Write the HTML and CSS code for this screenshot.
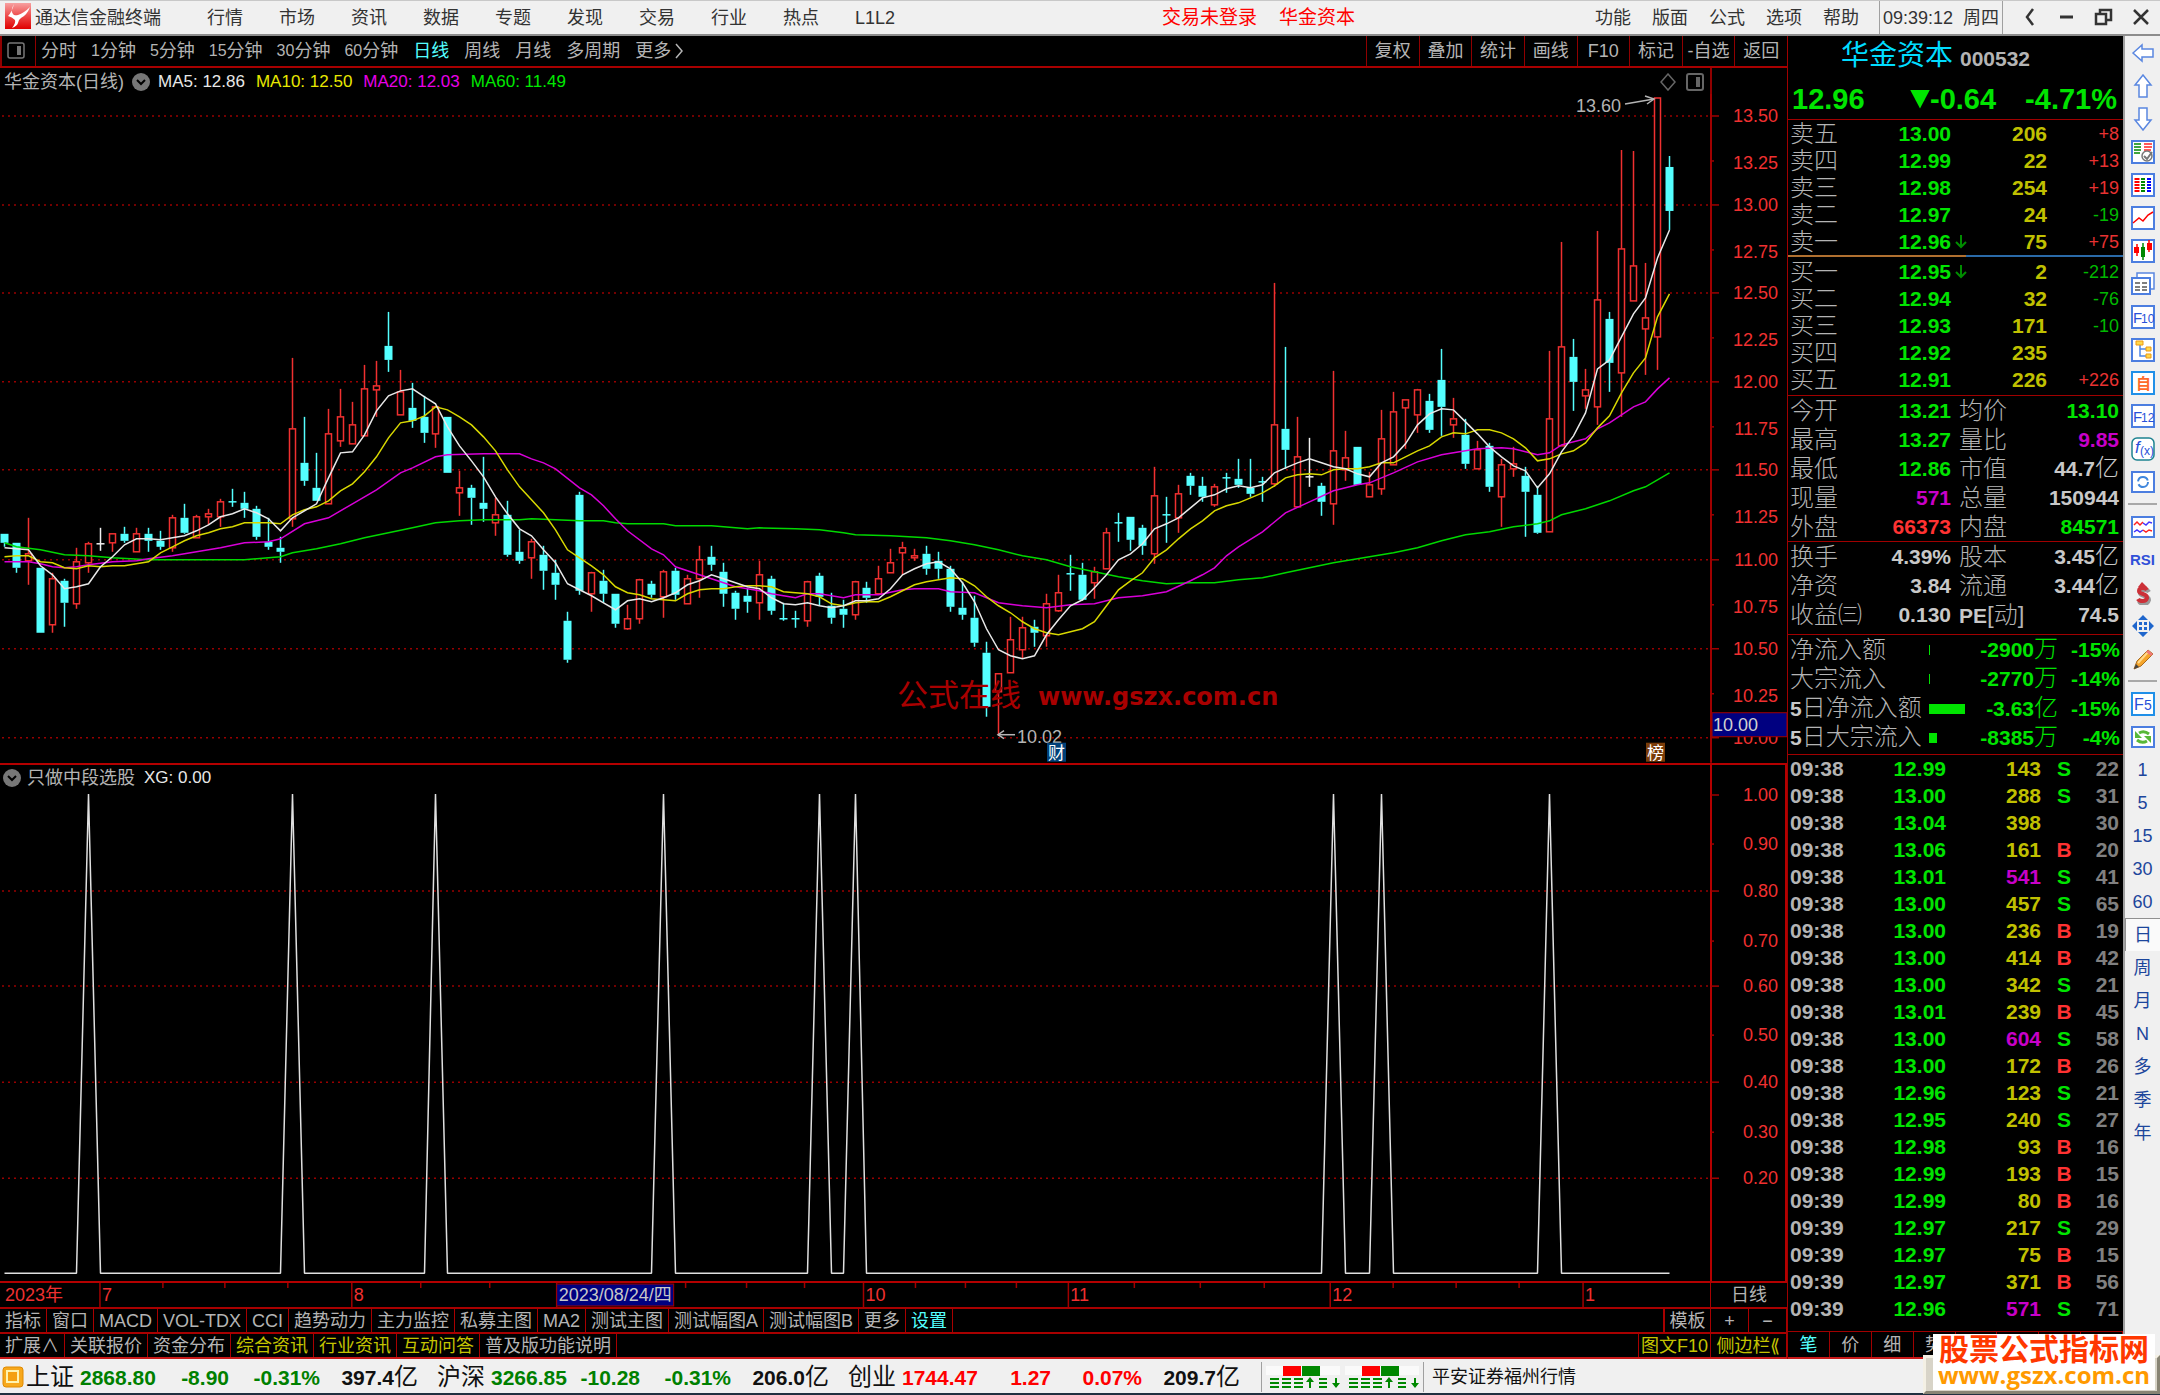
FILE: index.html
```html
<!DOCTYPE html>
<html lang="zh-CN">
<head>
<meta charset="utf-8">
<title>通达信金融终端</title>
<link rel="stylesheet" href="styles.css">
</head>
<body>
<header class="menubar">
  <svg class="logo" viewBox="0 0 26 26" width="26" height="26" aria-hidden="true">
    <defs><linearGradient id="lg" x1="0" y1="0" x2="0" y2="1"><stop offset="0" stop-color="#f7a0a0"/><stop offset=".5" stop-color="#ee4a4a"/><stop offset="1" stop-color="#e00000"/></linearGradient></defs>
    <rect width="26" height="26" fill="url(#lg)"/>
    <path d="M9 1Q5 8 8 11Q9 13 13 12Q19 10 25 4Q22 12 16 15Q13 17 13 20Q12 23 7 25Q11 20 10 17Q7 14 3 13Q7 9 9 1Z" fill="#fff"/>
  </svg>
  <span class="app-name">通达信金融终端</span>
  <nav class="menu">
    <button>行情</button><button>市场</button><button>资讯</button><button>数据</button><button>专题</button><button>发现</button><button>交易</button><button>行业</button><button>热点</button><button>L1L2</button>
  </nav>
  <div class="account"><span>交易未登录</span><span>华金资本</span></div>
  <nav class="menu menu-right">
    <button>功能</button><button>版面</button><button>公式</button><button>选项</button><button>帮助</button>
  </nav>
  <div class="clock"><time>09:39:12</time><span>周四</span></div>
  <div class="win">
    <button aria-label="后退"><svg viewBox="0 0 20 20" width="20" height="20"><path d="M13 2L7 10L13 18" fill="none" stroke="#333" stroke-width="2.5"/></svg></button>
    <button aria-label="最小化"><svg viewBox="0 0 20 20" width="20" height="20"><path d="M3 10H16" stroke="#333" stroke-width="3"/></svg></button>
    <button aria-label="还原"><svg viewBox="0 0 20 20" width="20" height="20"><path d="M2 7H12V17H2ZM6 7V3H17V13H12" fill="none" stroke="#333" stroke-width="2.5"/></svg></button>
    <button aria-label="关闭"><svg viewBox="0 0 20 20" width="20" height="20"><path d="M3 3L17 17M17 3L3 17" stroke="#333" stroke-width="2.5"/></svg></button>
  </div>
</header>

<div class="workspace">
  <main class="charts">
    <div class="periods">
      <button class="pane-toggle" aria-label="侧栏"><svg viewBox="0 0 18 18" width="18" height="18"><rect x="1" y="1" width="16" height="15" rx="2" fill="none" stroke="#777" stroke-width="1.5"/><rect x="10" y="4" width="4" height="9" fill="#777"/></svg></button>
      <div class="period-list">
        <button>分时</button><button><span>1</span>分钟</button><button><span>5</span>分钟</button><button><span>15</span>分钟</button><button><span>30</span>分钟</button><button><span>60</span>分钟</button><button class="on">日线</button><button>周线</button><button>月线</button><button>多周期</button><button>更多<svg class="chev" viewBox="0 0 14 18" width="14" height="18"><path d="M5 2L11 9L5 16" fill="none" stroke="#b4b4b4" stroke-width="1.5"/></svg></button>
      </div>
      <div class="tools">
        <button>复权</button><button>叠加</button><button>统计</button><button>画线</button><button>F10</button><button>标记</button><button>-自选</button><button>返回</button>
      </div>
    </div>

    <section class="panel panel-main">
      <div class="legend">
        <div class="legend-text">
          <span class="name">华金资本(日线)</span>
          <svg viewBox="0 0 18 18" width="18" height="18"><circle cx="9" cy="9" r="9" fill="#777"/><path d="M5 7L9 11L13 7" fill="none" stroke="#000" stroke-width="2"/></svg>
          <span class="c-white">MA5: 12.86</span><span class="c-yellow">MA10: 12.50</span><span class="c-magenta">MA20: 12.03</span><span class="c-green">MA60: 11.49</span>
          <svg class="push" viewBox="0 0 18 18" width="18" height="18"><path d="M9 1L16 9L9 17L2 9Z" fill="none" stroke="#666" stroke-width="1.5"/></svg>
          <svg viewBox="0 0 20 20" width="20" height="20"><rect x="2" y="2" width="16" height="16" rx="2" fill="none" stroke="#666" stroke-width="2"/><rect x="11" y="5" width="4" height="10" fill="#666"/></svg>
        </div>
        <div class="axis-cap"></div>
      </div>
      <svg class="plot" id="price-chart" role="img" aria-label="日线"></svg>
    </section>

    <section class="panel panel-sub">
      <div class="legend">
        <div class="legend-text sub">
          <svg viewBox="0 0 18 18" width="18" height="18"><circle cx="9" cy="9" r="9" fill="#777"/><path d="M5 7L9 11L13 7" fill="none" stroke="#000" stroke-width="2"/></svg>
          <span class="name">只做中段选股</span><span class="c-white">XG: 0.00</span>
        </div>
        <div class="axis-cap boxed"></div>
      </div>
      <svg class="plot" id="signal-chart" role="img" aria-label="选股信号"></svg>
    </section>

    <div class="dates">
      <svg class="date-axis" id="date-axis" role="img" aria-label="日期"></svg>
      <button class="cycle">日线</button>
    </div>

    <div class="tabs">
      <button>指标</button><button>窗口</button><button>MACD</button><button>VOL-TDX</button><button>CCI</button><button>趋势动力</button><button>主力监控</button><button>私募主图</button><button>MA2</button><button>测试主图</button><button>测试幅图A</button><button>测试幅图B</button><button>更多</button><button class="on">设置</button>
      <div class="tabs-end"><button class="tpl">模板</button><button class="step">+</button><button class="step">−</button></div>
    </div>
    <div class="tabs tabs-info">
      <button>扩展∧</button><button>关联报价</button><button>资金分布</button><button class="hot">综合资讯</button><button class="hot">行业资讯</button><button class="hot">互动问答</button><button>普及版功能说明</button>
      <div class="tabs-end"><button class="hot f10">图文F10</button><button class="hot side">侧边栏⟪</button></div>
    </div>
  </main>

  <aside class="quote">
    <div class="quote-head">
      <div class="stock"><h1>华金资本</h1><span>000532</span></div>
      <div class="last"><span>12.96</span><span><i class="tri"></i>-0.64</span><span>-4.71%</span></div>
    </div>
    <table class="book" id="asks"></table>
    <div class="ratio"><i></i></div>
    <table class="book bids" id="bids"></table>
    <div class="facts">
      <div><span>今开</span><b class="g">13.21</b><span>均价</span><b class="g">13.10</b></div>
      <div><span>最高</span><b class="g">13.27</b><span>量比</span><b class="m">9.85</b></div>
      <div><span>最低</span><b class="g">12.86</b><span>市值</span><b>44.7<em>亿</em></b></div>
      <div><span>现量</span><b class="m">571</b><span>总量</span><b>150944</b></div>
      <div><span>外盘</span><b class="r">66373</b><span>内盘</span><b class="g">84571</b></div>
    </div>
    <div class="facts facts-base">
      <div><span>换手</span><b>4.39%</b><span>股本</span><b>3.45<em>亿</em></b></div>
      <div><span>净资</span><b>3.84</b><span>流通</span><b>3.44<em>亿</em></b></div>
      <div><span>收益㈢</span><b>0.130</b><span><b>PE</b>[动]</span><b>74.5</b></div>
    </div>
    <div class="flows">
      <div><span>净流入额</span><i class="bar" style="width:1px"></i><b>-2900<em>万</em></b><b>-15%</b></div>
      <div><span>大宗流入</span><i class="bar" style="width:1px"></i><b>-2770<em>万</em></b><b>-14%</b></div>
      <div><span><b>5</b>日净流入额</span><i class="bar" style="width:36px"></i><b>-3.63<em>亿</em></b><b>-15%</b></div>
      <div><span><b>5</b>日大宗流入</span><i class="bar" style="width:8px"></i><b>-8385<em>万</em></b><b>-4%</b></div>
    </div>
    <div class="tick-area"><table class="ticks" id="ticks"></table></div>
    <div class="quote-tabs">
      <button class="on">笔</button><button>价</button><button>细</button><button>势</button><button></button><button></button><button></button><button></button>
    </div>
  </aside>

  <nav class="iconbar">
    <button aria-label="后退"><svg viewBox="0 0 24 24"><path d="M2 12L11 4V8H22V16H11V20Z" fill="#fff" stroke="#5a87e0" stroke-width="1.5"/></svg></button>
    <button aria-label="上"><svg viewBox="0 0 24 24"><path d="M12 1L20 11H16V23H8V11H4Z" fill="#fff" stroke="#5a87e0" stroke-width="1.5"/></svg></button>
    <button aria-label="下"><svg viewBox="0 0 24 24"><path d="M12 23L20 13H16V1H8V13H4Z" fill="#fff" stroke="#5a87e0" stroke-width="1.5"/></svg></button>
    <button aria-label="自选"><svg viewBox="0 0 24 24"><rect class="bx" x="1" y="1" width="22" height="22"/><path d="M3 4H10M3 7H10M3 10H10M3 13H9" stroke="#080" stroke-width="1.5"/><path d="M13 4H21M13 7H21M13 10H20" stroke="#f22" stroke-width="1.5"/><circle cx="16" cy="16" r="5" fill="#fff" stroke="#777" stroke-width="1.5"/><path d="M13 16L16 19L21 12" fill="none" stroke="#777" stroke-width="2"/></svg></button>
    <button aria-label="报价"><svg viewBox="0 0 24 24"><rect class="bx" x="1" y="1" width="22" height="22"/><path d="M6 5V20" stroke="#f00" stroke-width="5" stroke-dasharray="2 1"/><path d="M12 5V20" stroke="#080" stroke-width="4" stroke-dasharray="2 1"/><path d="M18 5V20" stroke="#00f" stroke-width="4" stroke-dasharray="2 1"/></svg></button>
    <button aria-label="分时"><svg viewBox="0 0 24 24"><rect class="bx" x="1" y="1" width="22" height="22"/><path d="M2 17L8 12L12 15L17 9L22 6" fill="none" stroke="#f00" stroke-width="1.5"/></svg></button>
    <button aria-label="K线"><svg viewBox="0 0 24 24"><rect class="bx" x="1" y="1" width="22" height="22"/><path d="M6 5V17M18 1V13" stroke="#f00" stroke-width="1.5"/><path d="M3 8H8V14H3ZM16 4H21V11H16Z" fill="#f00"/><path d="M12 4V21" stroke="#080" stroke-width="1.5"/><path d="M10 8H14V18H10Z" fill="#080"/></svg></button>
    <button aria-label="资讯"><svg viewBox="0 0 24 24"><path d="M6 1H23V17H19V7H6Z" fill="#fff" stroke="#5a87e0" stroke-width="1.5"/><rect class="bx" x="1" y="6" width="18" height="16"/><path d="M4 11H9M11 11H16M4 15H9M11 15H16M4 18H9M11 18H16" stroke="#555" stroke-width="1.5"/></svg></button>
    <button aria-label="F10"><svg viewBox="0 0 24 24"><rect class="bx" x="1" y="1" width="22" height="22"/><text x="2" y="18" font-size="15">F</text><text x="10" y="18" font-size="12">10</text></svg></button>
    <button aria-label="板块"><svg viewBox="0 0 24 24"><rect class="bx" x="1" y="1" width="22" height="22"/><path d="M9 7V18H15M9 11H15" fill="none" stroke="#4c86e8" stroke-width="1.5"/><path d="M5 3H12V7H5ZM15 9H20V13H15ZM15 16H20V20H15Z" fill="#ffd84a" stroke="#ee9911"/></svg></button>
    <button aria-label="自选股"><svg viewBox="0 0 24 24"><rect class="bx cy" x="1" y="1" width="22" height="22"/><text x="5" y="18" font-size="15" font-weight="700" class="or">自</text></svg></button>
    <button aria-label="F12"><svg viewBox="0 0 24 24"><rect class="bx" x="1" y="1" width="22" height="22"/><text x="2" y="18" font-size="15">F</text><text x="10" y="18" font-size="12">12</text></svg></button>
    <button aria-label="公式"><svg viewBox="0 0 24 24"><rect x="1" y="1" width="22" height="22" rx="5" fill="#fff" stroke="#1c8290" stroke-width="1.5"/><text x="4" y="16" font-size="17" font-style="italic">f</text><text x="9" y="18" font-size="12">(x)</text></svg></button>
    <button aria-label="刷新"><svg viewBox="0 0 24 24"><rect class="bx" x="1" y="2" width="22" height="20"/><circle cx="12" cy="12" r="5" fill="none" stroke="#3f86dc" stroke-width="2" stroke-dasharray="13 3"/></svg></button>
    <hr>
    <button aria-label="多股"><svg viewBox="0 0 24 24"><rect class="bx" x="1" y="2" width="22" height="20"/><path d="M3 10L6 7L9 10L12 7" fill="none" stroke="#f22" stroke-width="1.5"/><path d="M12 8L15 10L18 7L21 8M3 17L6 15L9 17L12 15" fill="none" stroke="#43f" stroke-width="1.5"/><path d="M12 15L15 17L18 15L21 16" fill="none" stroke="#f22" stroke-width="1.5"/></svg></button>
    <button class="rsi">RSI</button>
    <button aria-label="交易"><svg viewBox="0 0 24 24"><path d="M17 10Q16 8 12 8Q8 8 8 11Q8 13 12 14Q17 15 17 18Q16 22 12 22Q8 22 7 19" transform="translate(1 1)" fill="none" stroke="#999" stroke-width="4"/><path d="M16 9Q15 7 12 7Q8 7 8 10Q8 12 12 13Q16 14 16 17Q15 20 12 20Q8 20 7 18" fill="none" stroke="#cc3038" stroke-width="4"/><path d="M7 6L11 1L16 6Z" fill="#cc3038"/></svg></button>
    <button aria-label="移动"><svg viewBox="0 0 24 24"><path d="M12 1L17 6H7ZM12 23L17 18H7ZM1 12L6 7V17ZM23 12L18 7V17ZM8 8H11V11H8ZM13 8H16V11H13ZM8 13H11V16H8ZM13 13H16V16H13Z" fill="#1f66cc"/></svg></button>
    <button aria-label="画笔"><svg viewBox="0 0 24 24"><path d="M3 22L6 14L17 3L22 7L10 19Z" fill="#f5a52a" stroke="#a86a20"/><path d="M7 16L17 5" stroke="#ffd98a" stroke-width="2"/><path d="M17 3L22 7L20 9L15 5Z" fill="#ee7878"/><path d="M3 22L5 17L8 20Z" fill="#444"/></svg></button>
    <hr>
    <button aria-label="F5"><svg viewBox="0 0 24 24"><rect class="bx cy" x="1" y="1" width="22" height="22"/><text x="3" y="18" font-size="16">F</text><text x="13" y="18" font-size="14">5</text></svg></button>
    <button aria-label="循环"><svg viewBox="0 0 24 24"><rect class="bx" x="1" y="2" width="22" height="20"/><path d="M18 9Q13 5 8 8" fill="none" stroke="#58b838" stroke-width="3"/><path d="M4 6V13H11Z" fill="#58b838"/><path d="M6 15Q11 19 16 16" fill="none" stroke="#58b838" stroke-width="3"/><path d="M20 18V11H13Z" fill="#58b838"/></svg></button>
    <button>1</button><button>5</button><button>15</button><button>30</button><button>60</button><button class="sel">日</button><button>周</button><button>月</button><button>N</button><button>多</button><button>季</button><button>年</button>
  </nav>
</div>

<footer class="status">
  <svg class="coin" viewBox="0 0 22 22" width="22" height="22"><rect x="1" y="1" width="20" height="20" rx="3" fill="#f7a81c" stroke="#e08a00"/><rect x="4" y="4" width="13" height="13" fill="#fff3b0"/><rect x="6" y="6" width="9" height="9" fill="#f5a010"/></svg>
  <div class="index down"><span>上证</span><b>2868.80</b><b>-8.90</b><b>-0.31%</b><b class="amt">397.4<em>亿</em></b></div>
  <div class="index down"><span>沪深</span><b>3266.85</b><b>-10.28</b><b>-0.31%</b><b class="amt">206.0<em>亿</em></b></div>
  <div class="index up"><span>创业</span><b>1744.47</b><b>1.27</b><b>0.07%</b><b class="amt">209.7<em>亿</em></b></div>
  <div class="meters">
    <svg viewBox="0 0 74 24" width="74" height="24"><path d="M0 1H74V10H0Z" fill="#fafafa"/><path d="M17 1H35V11H17Z" fill="#f00"/><path d="M36 1H54V11H36Z" fill="#080"/><path d="M4 14H13M4 18H13M4 22H13M16 14H25M16 18H25M16 22H25M28 14H37M28 18H37M28 22H37M53 14H61M53 18H61M53 22H61M44 23V14M70 13V22" stroke="#080" stroke-width="2"/><path d="M40 17L44 12L48 17ZM66 18L70 23L74 18Z" fill="#080"/></svg>
    <svg viewBox="0 0 74 24" width="74" height="24"><path d="M0 1H74V10H0Z" fill="#fafafa"/><path d="M17 1H35V11H17Z" fill="#f00"/><path d="M36 1H54V11H36Z" fill="#080"/><path d="M4 14H13M4 18H13M4 22H13M16 14H25M16 18H25M16 22H25M28 14H37M28 18H37M28 22H37M53 14H61M53 18H61M53 22H61M44 23V14M70 13V22" stroke="#080" stroke-width="2"/><path d="M40 17L44 12L48 17ZM66 18L70 23L74 18Z" fill="#080"/></svg>
  </div>
  <span class="server">平安证券福州行情</span>
</footer>

<div class="promo-frame"><div class="promo"><strong>股票公式指标网</strong><span>www.gszx.com.cn</span></div></div>
<script src="app.js"></script>
</body>
</html>
```
FILE: styles.css
```css
* { box-sizing: border-box; }
body {
  margin: 0;
  min-height: 100vh;
  display: flex;
  flex-direction: column;
  background: #000;
  color: #b4b4b4;
  font-family: "Liberation Sans", "Noto Sans CJK SC", sans-serif;
  font-size: 18px;
  line-height: 24px;
}
button {
  margin: 0;
  padding: 0;
  border: 0;
  background: none;
  color: inherit;
  font: inherit;
  white-space: nowrap;
}
svg { display: block; flex: none; }
em, i { font-style: normal; }
table { border-collapse: collapse; }

.menubar {
  height: 36px;
  display: flex;
  align-items: center;
  padding-left: 5px;
  background: #f0f0f0;
  border-top: 1px solid #c8c8c8;
  border-bottom: 2px solid #8c8c8c;
  color: #333;
  white-space: nowrap;
}
.menubar > * { flex: none; }
.logo { margin-bottom: 4px; }
.app-name { margin-left: 4px; }
.menu { display: flex; gap: 36px; margin-left: 46px; }
.account { display: flex; gap: 22px; margin-left: auto; padding-left: 27px; color: #f00; font-size: 19px; }
.menu-right { gap: 21px; margin-left: auto; }
.clock {
  display: flex;
  align-items: center;
  justify-content: space-between;
  width: 124px;
  height: 33px;
  margin-left: 20px;
  padding: 0 3px;
  border-left: 1px solid #a0a0a0;
  border-right: 1px solid #a0a0a0;
}
.win { display: flex; padding-left: 9px; padding-bottom: 2px; }
.win button { width: 37px; display: flex; justify-content: center; }

.workspace { flex: 1; display: flex; }
.charts { flex: 1; min-width: 0; display: flex; flex-direction: column; }
.periods { height: 32px; display: flex; border-bottom: 2px solid #a80000; }
.pane-toggle { width: 36px; padding-left: 5px; border-left: 2px solid #900000; border-right: 1px solid #900000; }
.period-list { display: flex; align-items: center; gap: 14px; padding-left: 5px; }
.period-list button { display: flex; align-items: center; }
.period-list button span { font-size: 16px; }
.period-list .on, .period-list .on ~ button { margin-left: 1px; }
.periods .on, .tabs .on, .quote-tabs .on { color: #54ffff; }
.tools { margin-left: auto; display: grid; grid-template-columns: repeat(8, 1fr); width: 421px; }
.tools button { border-left: 1px solid #900000; }

.panel { display: flex; flex-direction: column; min-height: 0; border-bottom: 2px solid #b40000; }
.panel-main { flex: 697 1 0; }
.panel-sub { flex: 518 1 0; }
.legend { height: 26px; display: flex; flex: none; }
.legend-text { flex: 1; display: flex; align-items: center; gap: 8px; padding: 1px 5px 0 4px; font-size: 17px; }
.legend-text span + span { margin-left: 3px; }
.legend-text.sub { padding-left: 3px; gap: 6px; }
.legend .name { font-size: 18px; }
.push { margin-left: auto; }
.axis-cap { width: 77px; border-left: 2px solid #900000; }
.axis-cap.boxed { border-right: 2px solid #b40000; border-color: #b40000; }
.plot { width: 100%; flex: 1 1 0; height: 0; min-height: 0; overflow: visible; }
.c-white { color: #e8e8e8; }
.c-yellow { color: #e8e800; }
.c-magenta { color: #e800e8; }
.c-green { color: #00e800; }

.dates { height: 24px; display: flex; }
.date-axis { flex: 1 1 0; width: 0; height: 24px; }
.cycle { width: 77px; border-left: 1px solid #a80000; }

.tabs { height: 25px; display: flex; border-top: 2px solid #a80000; line-height: 22px; }
.tabs-info { height: 27px; border-bottom: 2px solid #c81818; }
.tabs button { padding: 0 5px; border-right: 1px solid #a80000; }
.tabs-end { margin-left: auto; display: flex; }
.tabs-end button { padding: 0; }
.tabs-end .tpl { width: 48px; border-left: 2px solid #a80000; }
.tabs-end .step { width: 38px; }
.tabs-end .f10 { width: 73px; border-left: 1px solid #a80000; }
.tabs-end .side { width: 76px; }
.tabs .hot { color: #c4c400; }

.quote {
  width: 336px;
  display: flex;
  flex-direction: column;
  border-left: 1px solid #a00000;
  font-size: 24px;
  font-weight: 300;
  color: #b4b4b4;
}
.quote b { font-size: 21px; color: #c8c8c8; font-weight: 700; }
.quote em { font-size: 24px; font-weight: 300; line-height: 0; color: inherit; }
.quote-head { height: 84px; border-bottom: 1px solid #a00000; }
.stock { display: flex; align-items: center; justify-content: center; gap: 7px; height: 40px; padding-right: 40px; }
.stock h1 { margin: 0; font-size: 28px; font-weight: 400; color: #00dcff; }
.stock span { font-size: 21px; font-weight: 700; color: #b4b4b4; padding-top: 5px; }
.last { display: grid; grid-template-columns: 118px 100px 1fr; padding: 11px 6px 0 4px; font-size: 29px; font-weight: 700; color: #00e400; }
.last span { display: flex; align-items: center; }
.last span:last-child { justify-content: flex-end; }
.tri { width: 20px; height: 19px; background: #00e400; clip-path: polygon(0 0, 100% 0, 50% 100%); }
.book, .ticks { width: 100%; table-layout: fixed; }
.book td, .ticks td, .book th { padding: 0; height: 27px; line-height: 26px; text-align: right; font-size: 21px; font-weight: 700; white-space: nowrap; }
.book th { width: 60px; padding-left: 2px; text-align: left; font-size: 24px; font-weight: 300; }
.book td:nth-child(2) { width: 103px; color: #00e400; }
.book td:nth-child(3) { width: 20px; color: #008800; }
.book td:nth-child(3) svg { margin: 0 auto; }
.book td:nth-child(4) { width: 76px; color: #c0c000; }
.book td:nth-child(5) { padding-right: 4px; font-size: 18px; font-weight: 400; }
.r, .quote b.r { color: #ff3232; }
.g, .quote b.g { color: #00e400; }
.m, .quote b.m { color: #c800c8; }
.book .g { color: #00b800; }
.book .r { color: #e83232; }
.ratio { height: 2px; background: #2a6aa8; }
.ratio i { display: block; width: 53%; height: 2px; background: #b07030; }
.bids { margin: 1px 0 2px; }
.facts, .flows { border-top: 1px solid #a00000; padding-left: 2px; line-height: 30px; }
.facts > div { display: grid; grid-template-columns: 60px 101px 60px 108px; height: 29px; white-space: nowrap; }
.facts > div > b { text-align: right; }
.facts > div > b:last-child { justify-self: end; }
.facts > div > span:nth-child(3) { padding-left: 8px; }
.facts-base { padding-bottom: 5px; }
.flows > div { display: grid; grid-template-columns: 139px 40px 1fr 62px; align-items: center; height: 29px; padding-right: 3px; white-space: nowrap; }
.flows > div > b { text-align: right; color: #00e400; }
.flows { padding-bottom: 3px; border-bottom: 1px solid #a00000; }
.bar { height: 10px; background: #00e400; }
.tick-area { flex: 1; }
.ticks td:nth-child(1) { width: 60px; padding-left: 2px; text-align: left; }
.ticks td:nth-child(2) { width: 98px; color: #00e400; }
.ticks td:nth-child(3) { width: 95px; color: #c0c000; }
.ticks td:nth-child(4) { width: 46px; text-align: center; }
.ticks td:nth-child(5) { padding-right: 4px; color: #808080; }
.ticks td.big { color: #c800c8; }
.quote-tabs { height: 28px; display: grid; grid-template-columns: repeat(8, 1fr); border-top: 1px solid #a00000; border-bottom: 2px solid #c81818; font-size: 18px; font-weight: 400; }
.quote-tabs button { border-right: 1px solid #a00000; }

.iconbar {
  width: 37px;
  display: flex;
  flex-direction: column;
  background: #f0f0f0;
  border-left: 2px solid #a0a0a0;
  color: #1c469c;
}
.iconbar button { height: 33px; display: flex; align-items: center; justify-content: center; }
.iconbar svg { width: 24px; height: 24px; }
.iconbar text { fill: #2850d8; font-family: "Liberation Sans", "Noto Sans CJK SC", sans-serif; }
.iconbar .or { fill: #ff6a2a; }
.iconbar hr { width: 29px; height: 2px; margin: 5px auto; border: 0; background: #a8a8a8; }
.bx { fill: #fff; stroke: #4c7ee0; stroke-width: 2; }
.bx.cy { stroke: #2090e8; }
.iconbar .rsi { font-weight: 700; font-size: 15px; color: #3050d8; }
.iconbar .sel { background: #fafafa; border-top: 1px solid #909090; border-left: 1px solid #909090; }

.status {
  height: 36px;
  display: flex;
  align-items: center;
  padding: 2px 0 0 2px;
  background: #f0f0f0;
  border-bottom: 2px solid #203040;
  color: #111;
  white-space: nowrap;
}
.index { display: grid; grid-template-columns: 54px 80px 69px 91px 98px; margin-right: 19px; font-size: 24px; align-items: baseline; }
.coin + .index { margin-left: 2px; }
.index b { font-size: 21px; text-align: right; }
.index b:nth-child(2) { text-align: left; }
.index em { font-size: 24px; font-weight: 400; line-height: 0; }
.down b { color: #008000; }
.up b { color: #f00; }
.index .amt { color: #111; }
.meters { display: flex; align-items: center; gap: 5px; height: 30px; padding: 0 4px; margin-left: 2px; border-left: 1px solid #a0a0a0; border-right: 1px solid #a0a0a0; }
.server { padding-left: 8px; }

.promo-frame {
  position: absolute;
  right: 0;
  bottom: 1px;
  width: 237px;
  height: 39px;
  background: #d8d4c8;
  border: 3px solid #f4f0e4;
  border-right-color: #888474;
  border-bottom-color: #888474;
}
.promo {
  position: absolute;
  right: 2px;
  bottom: 1px;
  width: 222px;
  height: 56px;
  display: flex;
  flex-direction: column;
  align-items: center;
  background: #fff;
  white-space: nowrap;
}
.promo strong { font-size: 30px; line-height: 31px; color: #ff3800; }
.promo span { font: 700 24px/20px "Open Sans", sans-serif; color: #ff9a00; }
```
FILE: app.js
```js
// Candles: [kind, high, top, bottom, low]; c = falling, r = rising, w = flat
const candles = `c534,534,543,547 c543,543,568,573 r518,554,561,585 c568,568,633,633 r573,579,625,633 c579,581,603,627 r548,562,604,609 r542,544,563,573 w528,544,544,551 r534,534,543,552
c527,534,541,543 r528,534,552,552 c528,534,541,552 c531,541,547,550 r515,518,548,552 c504,518,533,534 r515,517,538,538 r509,514,517,525 r499,502,517,527 c489,502,502,507
c492,503,509,518 c506,509,537,540 c518,542,547,550 c537,548,552,563 r358,429,519,527 c417,463,481,486 c453,488,501,501 r409,434,504,504 r389,417,441,447 r402,425,444,444
r365,389,436,436 r361,386,390,417 c312,346,360,372 r370,392,415,415 c383,408,421,428 c396,417,433,443 r407,407,434,448 c417,417,473,473 r471,488,493,516 c485,488,498,525
c457,503,509,522 r498,515,523,536 c501,515,555,557 c530,552,561,564 r539,542,558,579 c546,555,571,590 c560,573,585,600 c612,621,660,663 c492,495,591,595 r572,573,594,612
c570,581,594,603 c594,594,624,628 r605,619,629,630 r579,580,619,624 c581,584,595,598 r570,572,597,618 c568,571,595,600 r575,579,604,604 r546,560,579,598 c546,557,565,571
c563,572,594,607 c591,593,609,620 c588,596,602,613 r561,575,603,620 c576,579,611,615 c603,619,619,621 c611,619,619,628 r581,582,621,627 c573,576,597,606 c593,606,618,624
c600,609,615,628 r581,582,615,620 c582,588,598,603 r566,579,594,595 r549,563,573,573 r542,548,553,575 r549,556,558,561 c546,554,569,575 c552,561,569,579 c566,569,607,612
c582,608,615,620 c596,618,643,647 c642,653,707,717 r674,674,692,736 r617,640,673,673 r617,628,650,659 c620,627,633,647 r594,604,636,647 r575,593,611,612 c555,574,574,591
c563,575,600,601 r567,572,583,599 r528,533,569,569 c513,523,523,542 c517,517,540,551 c525,528,546,555 r467,496,554,564 c497,515,515,543 r485,494,518,533 c473,476,486,495
c477,486,497,502 r484,487,505,507 c473,478,478,493 c459,479,485,488 c459,488,494,497 c477,482,482,502 r283,425,484,487 c347,429,450,469 r417,457,507,507 w438,477,477,487
c483,486,502,516 r371,451,504,525 r431,458,470,481 c447,447,485,485 r472,485,497,497 r410,439,489,495 r392,412,465,465 r400,400,408,449 r389,390,415,433 c394,401,430,433
c349,380,407,436 r398,419,425,438 c419,435,464,469 r441,450,469,469 c443,446,487,492 r459,465,497,527 r447,464,469,477 c467,476,492,537 c486,495,533,534 r351,419,532,532
r242,347,446,446 c339,357,382,411 r369,390,396,409 r231,300,407,425 c312,319,363,392 r150,249,373,417 r151,266,301,301 r263,318,329,375 r98,98,337,370 c156,167,211,230`
  .split(/\s+/).map(s => [s[0], ...s.slice(1).split(',').map(Number)]);

const ma5 = [548,549,550,566,575,589,587,584,567,557,545,539,539,540,538,536,531,525,517,514,509,513,519,531,518,511,504,478,453,452,
435,411,396,391,389,397,404,427,446,461,477,497,514,529,536,550,563,584,590,596,603,610,601,599,602,598,593,585,581,575,
579,583,587,589,598,604,605,603,606,608,606,601,601,599,589,575,569,564,562,569,583,602,629,650,656,659,656,635,620,606,
600,588,575,560,554,544,529,524,518,508,498,495,489,486,488,485,473,468,463,459,463,467,469,474,477,463,457,444,425,414,
409,410,422,434,447,457,466,471,488,474,452,436,413,369,360,337,314,298,258,230].map((v, i) => [i, v]);
const ma10 = [557,556,556,562,563,568,569,566,567,566,566,564,562,553,547,541,536,533,529,527,523,523,523,524,515,510,507,501,491,484,
472,457,438,423,421,416,407,410,417,425,437,451,470,487,500,513,530,550,558,566,575,587,593,595,599,600,601,594,590,589,
589,587,586,586,587,592,593,594,597,604,606,603,602,602,597,591,585,582,580,578,579,586,597,606,613,622,629,633,635,632,
629,622,606,590,581,573,558,550,539,529,521,511,506,503,498,493,486,478,475,474,475,470,469,469,467,463,463,457,451,446,
437,433,434,430,430,433,439,448,461,459,454,451,443,428,416,393,373,358,317,294].map((v, i) => [i, v]);
const ma20 = [[0,562],[2,562],[3,564],[4,567],[5,568],[6,567],[7,565],[9,562],[11,561],[12,559],[14,556],[16,552],[18,548],[20,543],[22,542],[23,539],[25,524],[26,521],[27,518],[29,504],[31,490],[33,473],[34,468],[36,457],[37,455],[40,454],[43,454],[44,459],[45,463],[46,469],[48,488],[49,495],[50,506],[51,519],[52,531],[54,549],[55,555],[56,567],[58,575],[60,583],[61,587],[63,591],[64,594],[66,598],[67,594],[68,594],[70,598],[71,595],[73,595],[75,590],[76,589],[78,589],[79,592],[81,593],[83,603],[85,606],[87,608],[89,605],[91,604],[93,598],[95,596],[97,592],[99,581],[100,575],[101,568],[102,556],[103,547],[105,532],[107,513],[109,502],[111,491],[113,485],[114,483],[116,473],[118,462],[120,455],[122,451],[123,449],[125,448],[126,449],[127,452],[128,455],[129,453],[130,445],[132,439],[133,429],[134,423],[135,415],[136,407],[137,402],[138,389],[139,378]];
const ma60 = [[0,543],[1,547],[3,550],[5,555],[7,556],[9,558],[12,560],[20,560],[22,558],[23,557],[24,553],[26,549],[28,544],[30,538],[32,533],[34,528],[36,523],[38,521],[40,520],[43,520],[44,519],[46,520],[48,521],[50,521],[51,523],[52,524],[55,524],[56,526],[59,526],[60,527],[62,529],[63,528],[66,529],[68,530],[70,533],[71,535],[74,536],[77,538],[79,541],[81,545],[83,550],[85,556],[87,560],[89,567],[91,572],[93,577],[95,581],[97,584],[99,583],[101,583],[103,580],[105,578],[107,573],[109,568],[111,563],[113,559],[115,555],[116,553],[118,548],[120,541],[122,535],[124,532],[126,527],[128,524],[129,521],[130,515],[132,509],[134,501],[136,491],[137,487],[138,480],[139,473]];
const signals = [7, 24, 36, 55, 68, 71, 111, 115, 129];

const PLOT_W = 1711, AXIS_W = 77;
const slot = i => 4.5 + 12 * i - Math.floor(i / 35.6);
const RED = '#f03030', LINE = '#a00000', CYAN = '#54ffff';
const FONT = '"Liberation Sans","Noto Sans CJK SC",sans-serif';

function canvas(id, top, bottom) {
  const svg = document.getElementById(id);
  svg.replaceChildren();
  const box = svg.getBoundingClientRect();
  const w = box.width - (id === 'date-axis' ? 0 : AXIS_W - 1);
  const X = x => x <= PLOT_W ? x * w / PLOT_W : w + x - PLOT_W;
  const Y = y => (y - top) * box.height / (bottom - top);
  const add = (tag, attrs, text) => {
    const el = document.createElementNS('http://www.w3.org/2000/svg', tag);
    for (const k in attrs) el.setAttribute(k, attrs[k]);
    if (text) el.textContent = text;
    svg.appendChild(el);
    return el;
  };
  const line = (pts, stroke, extra) => add('polyline', {
    points: pts.map(p => X(p[0]) + ',' + Y(p[1])).join(' '), fill: 'none', stroke, 'stroke-width': 1.5, ...extra });
  const rect = (x, y, rw, rh, fill, extra) => add('rect', { x: X(x), y: Y(y), width: rw, height: rh, fill, ...extra });
  const text = (x, y, s, fill, extra) => add('text', { x: X(x), y: Y(y) + 6, fill, 'font-family': FONT, 'font-size': 18, ...extra }, s);
  return { X, Y, line, rect, text };
}

function drawPrice() {
  const c = canvas('price-chart', 94, 763);
  c.line([[1711, 94], [1711, 763]], LINE, { 'stroke-width': 2 });
  const prices = [116, 163, 205, 252, 293, 340, 382, 429, 470, 517, 560, 607, 649, 696, 738];
  prices.forEach((y, k) => {
    const major = k % 2 === 0;
    if (major) c.line([[2, y], [1710, y]], '#980000', { 'stroke-dasharray': '2 4' });
    c.line([[1711, major ? y : y - 2], [major ? 1719 : 1714, major ? y : y - 2]], LINE);
    c.text(1778, y, (13.5 - k * 0.25).toFixed(2), RED, { 'text-anchor': 'end' });
  });
  candles.forEach(([kind, hi, top, bot, lo], i) => {
    const x = slot(i), col = { c: CYAN, r: RED, w: '#f0f0f0' }[kind];
    if (top === bot) {
      c.line([[x, hi], [x, lo]], col);
      c.line([[x - 4, top], [x + 4, top]], col);
      return;
    }
    if (hi < top) c.line([[x, hi], [x, top]], col);
    if (lo > bot) c.line([[x, bot], [x, lo]], col);
    if (kind === 'c') c.rect(x - 4, top, 8, c.Y(bot) - c.Y(top), col);
    else c.rect(x - 3, top, 6, c.Y(bot) - c.Y(top), '#000', { stroke: col, 'stroke-width': 1.5 });
  });
  [[ma60, '#00d800'], [ma20, '#d800d8'], [ma10, '#d8d800'], [ma5, '#e8e8e8']].forEach(([d, col]) =>
    c.line(d.map(([i, y]) => [slot(i), y]), col));
  c.text(1576, 106, '13.60', '#b4b4b4');
  c.line([[1625, 104], [1654, 99]], '#b4b4b4');
  c.line([[1645, 96], [1654, 99], [1647, 104]], '#b4b4b4');
  c.text(1017, 737, '10.02', '#b4b4b4');
  c.line([[1015, 735], [998, 735]], '#b4b4b4');
  c.line([[1004, 731], [998, 735], [1004, 739]], '#b4b4b4');
  c.rect(1047, 743, 19, 19, '#004078');
  c.text(1048, 753, '财', '#fff', { 'font-size': 17 });
  c.rect(1646, 743, 19, 19, '#7a3c08');
  c.text(1647, 753, '榜', '#fff', { 'font-size': 17 });
  c.text(897, 700, '公式在线', '#a80000', { 'font-size': 31 });
  c.text(1038, 699, 'www.gszx.com.cn', '#a80000', { 'font-size': 24, 'font-weight': 700, 'font-family': '"DejaVu Sans",sans-serif' });
  c.rect(1712, 713, 75, 24, '#000080', { stroke: LINE });
  c.text(1713, 725, '10.00', '#d0d0d0');
}

function drawSignal() {
  const c = canvas('signal-chart', 791, 1281);
  c.line([[1711, 791], [1711, 1281]], '#b40000', { 'stroke-width': 2 });
  c.line([[1786, 791], [1786, 1281]], '#b40000', { 'stroke-width': 2 });
  [795, 844, 891, 941, 986, 1035, 1082, 1132, 1178].forEach((y, k) => {
    const major = k % 2 === 0;
    if (major && k) c.line([[2, y], [1710, y]], '#980000', { 'stroke-dasharray': '2 4' });
    c.line([[1711, y], [major ? 1719 : 1714, y]], LINE);
    c.text(1778, y, (1 - k * 0.1).toFixed(2), RED, { 'text-anchor': 'end' });
  });
  c.line(candles.map((_, i) => [slot(i), signals.includes(i) ? 794 : 1273]), '#e0e0e0', { 'stroke-miterlimit': 1 });
}

function drawDates() {
  const c = canvas('date-axis', 1283, 1307);
  c.text(5, 1295, '2023年', RED);
  [[100, '7'], [352, '8'], [557, ''], [864, '10'], [1069, '11'], [1331, '12'], [1584, '1']].forEach(([x, s]) => {
    c.line([[x, 1283], [x, 1307]], LINE);
    if (s) c.text(x + 2, 1295, s, RED);
  });
  [163, 225, 288, 421, 490, 686, 747, 805, 916, 966, 1017, 1135, 1201, 1265, 1394, 1457, 1520].forEach(x =>
    c.line([[x, 1283], [x, 1288]], LINE));
  c.rect(557, 1284, 117, 22, '#000080', { stroke: LINE });
  c.text(559, 1295, '2023/08/24/四', '#c8c8c8');
}

const down = '<svg viewBox="0 0 14 16" width="14" height="16"><path d="M7 1V13M2 8L7 13L12 8" fill="none" stroke="#008c00" stroke-width="2"/></svg>';
function book(id, rows) {
  document.getElementById(id).innerHTML = rows.map(([n, p, v, d, a]) =>
    `<tr><th scope="row">${n}</th><td>${p}</td><td>${a ? down : ''}</td><td>${v}</td><td class="${d[0] === '+' ? 'r' : 'g'}">${d}</td></tr>`).join('');
}
book('asks', [['卖五', '13.00', 206, '+8'], ['卖四', '12.99', 22, '+13'], ['卖三', '12.98', 254, '+19'], ['卖二', '12.97', 24, '-19'], ['卖一', '12.96', 75, '+75', 1]]);
book('bids', [['买一', '12.95', 2, '-212', 1], ['买二', '12.94', 32, '-76'], ['买三', '12.93', 171, '-10'], ['买四', '12.92', 235, ''], ['买五', '12.91', 226, '+226']]);

const trades = `38 12.99 143 S 22|38 13.00 288 S 31|38 13.04 398 - 30|38 13.06 161 B 20|38 13.01 541 S 41|38 13.00 457 S 65|38 13.00 236 B 19|38 13.00 414 B 42|38 13.00 342 S 21|38 13.01 239 B 45|38 13.00 604 S 58|38 13.00 172 B 26|38 12.96 123 S 21|38 12.95 240 S 27|38 12.98 93 B 16|38 12.99 193 B 15|39 12.99 80 B 16|39 12.97 217 S 29|39 12.97 75 B 15|39 12.97 371 B 56|39 12.96 571 S 71`;
document.getElementById('ticks').innerHTML = trades.split('|').map(t => {
  const [m, p, v, s, n] = t.split(' ');
  return `<tr><td>09:${m}</td><td>${p}</td><td class="${v > 500 ? 'big' : ''}">${v}</td><td class="${s === 'B' ? 'r' : 'g'}">${s === '-' ? '' : s}</td><td>${n}</td></tr>`;
}).join('');

function draw() { drawPrice(); drawSignal(); drawDates(); }
draw();
addEventListener('resize', draw);
```
